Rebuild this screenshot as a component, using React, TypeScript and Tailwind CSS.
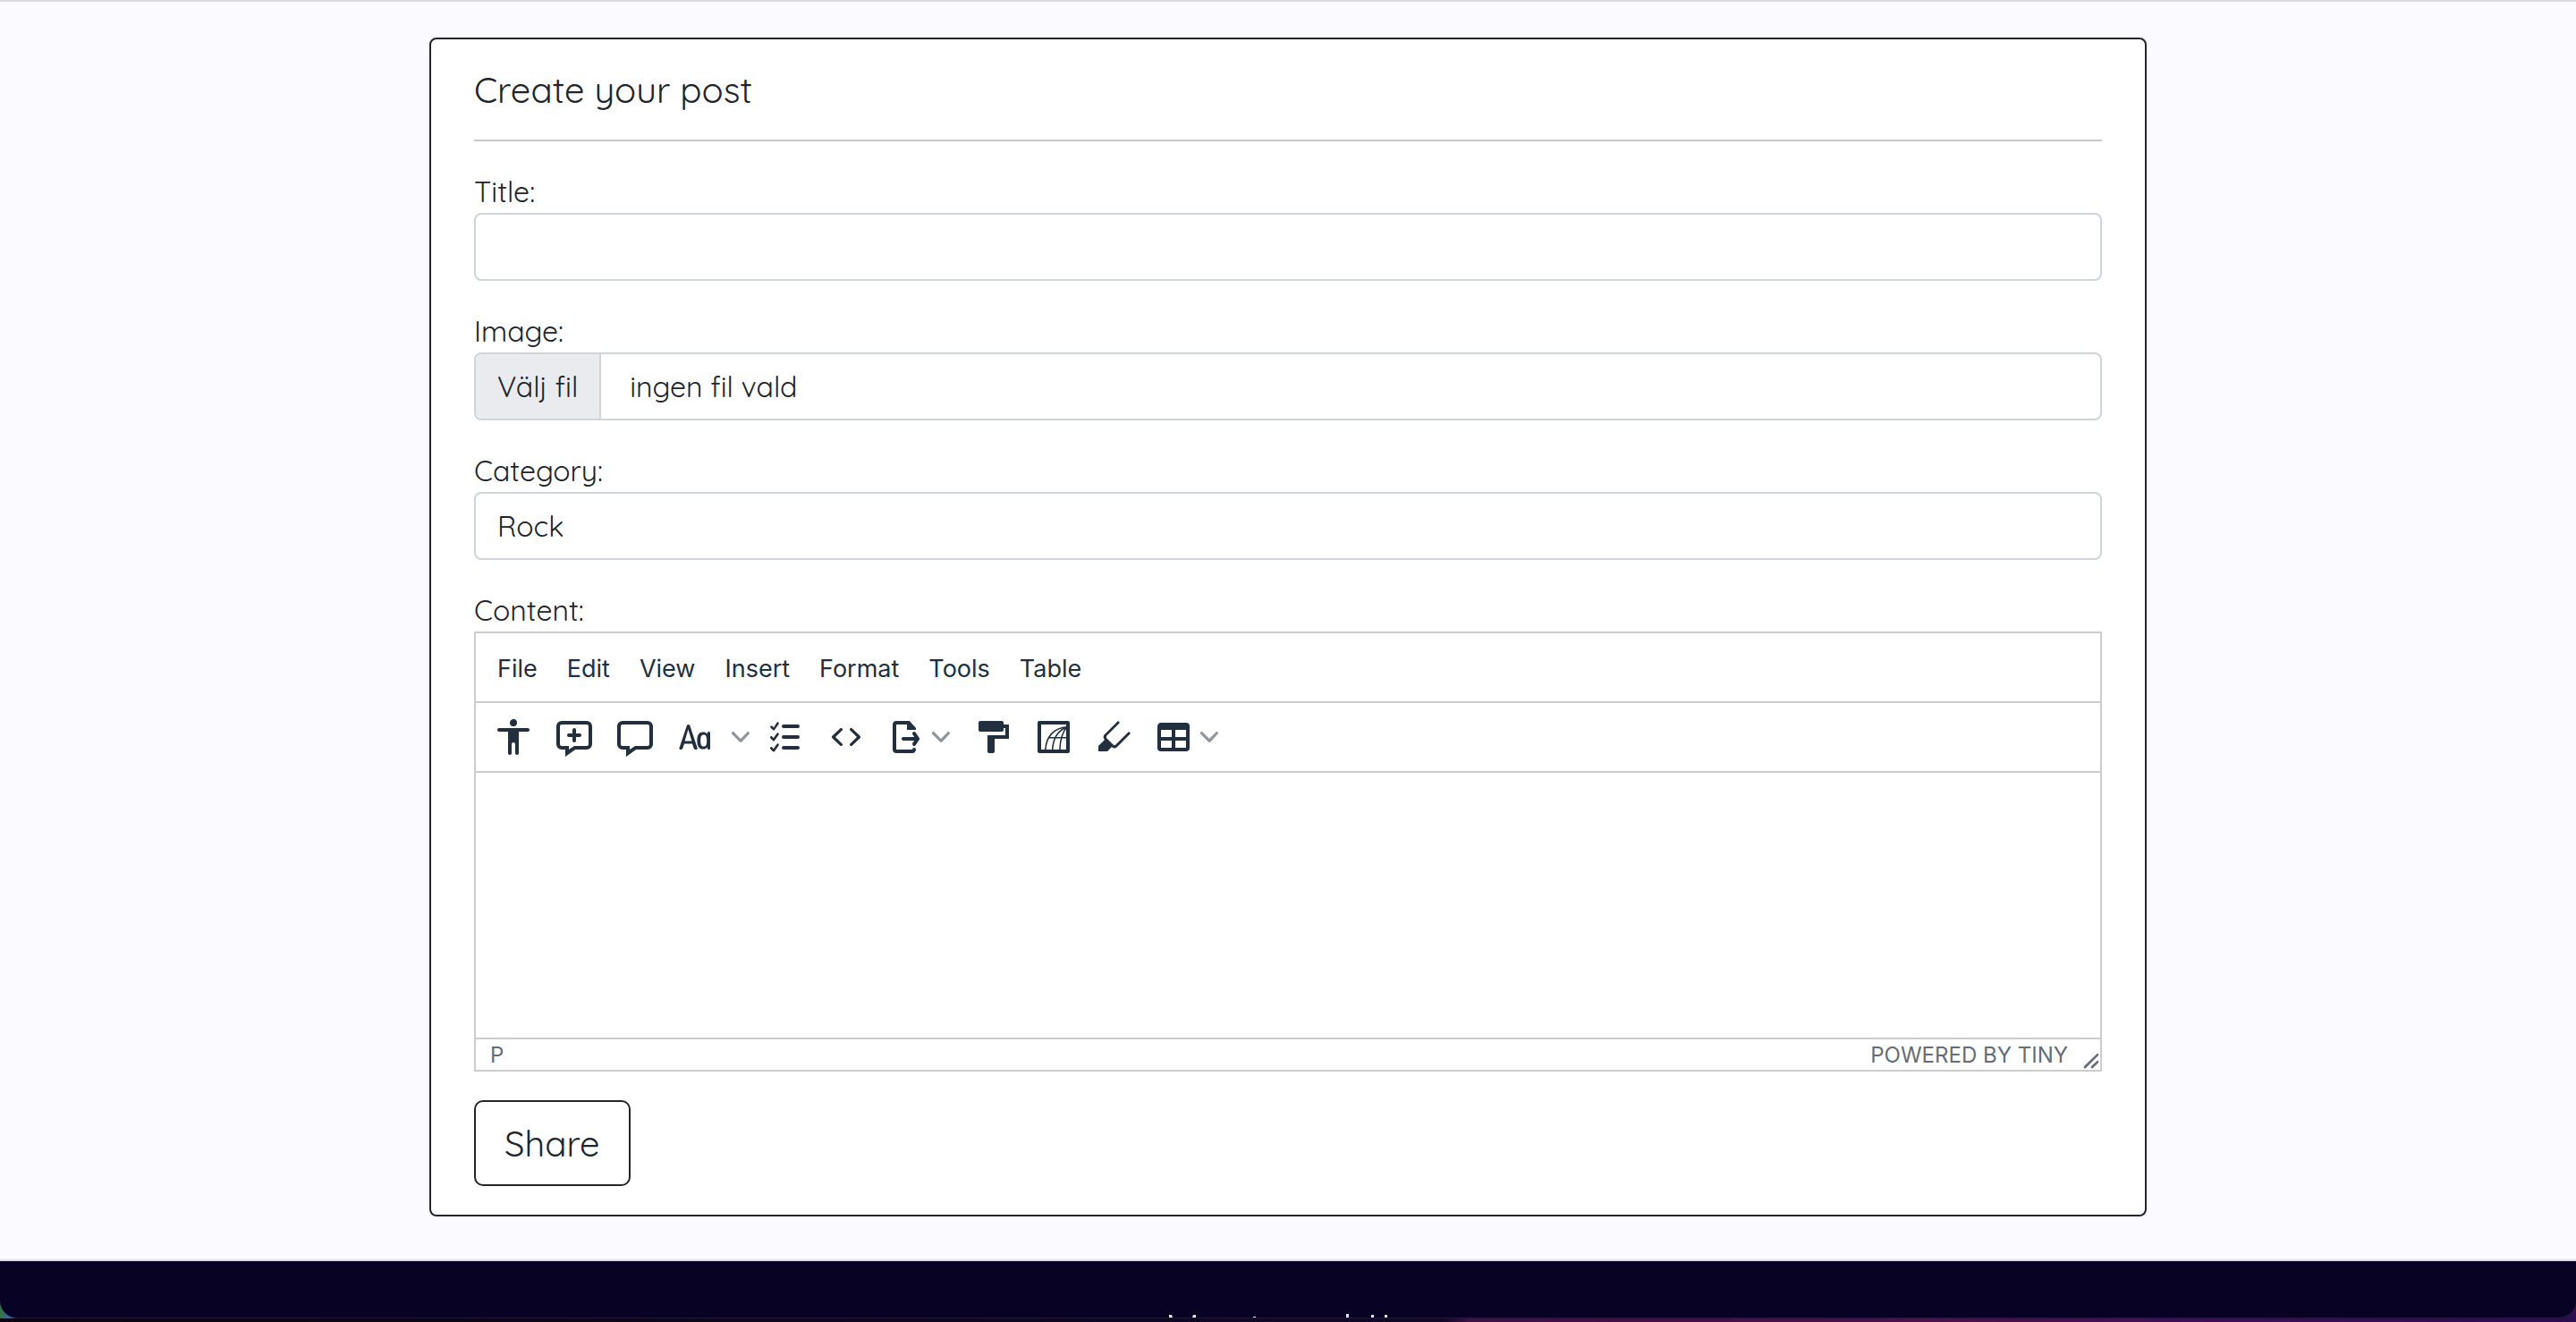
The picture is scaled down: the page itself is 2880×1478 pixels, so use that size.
import React, { useState } from "react";

const MENUS = ["File", "Edit", "View", "Insert", "Format", "Tools", "Table"];

function Icon({ children }: { children: React.ReactNode }) {
  return (
    <svg viewBox="0 0 24 24" className="size-12 shrink-0" fill="currentColor" fillRule="evenodd" aria-hidden="true">
      {children}
    </svg>
  );
}

function Chevron() {
  return (
    <svg viewBox="0 0 10 10" className="size-5 shrink-0 opacity-50" fill="currentColor" aria-hidden="true">
      <path d="M8.7 2.2c.3-.3.8-.3 1 0 .4.4.4.9 0 1.2L5.7 7.8c-.3.3-.9.3-1.2 0L.2 3.4a.8.8 0 0 1 0-1.2c.3-.3.8-.3 1.1 0L5 6l3.7-3.8Z" />
    </svg>
  );
}

function Tool({ label, children }: { label: string; children: React.ReactNode }) {
  return (
    <button type="button" aria-label={label} className="flex h-16 w-[68px] items-center justify-center rounded hover:bg-slate-200">
      <Icon>{children}</Icon>
    </button>
  );
}

function MenuTool({ label, children }: { label: string; children: React.ReactNode }) {
  return (
    <button type="button" aria-label={label} className="flex h-16 w-24 items-center gap-1.5 rounded pl-2 hover:bg-slate-200">
      <Icon>{children}</Icon>
      <Chevron />
    </button>
  );
}

function Toolbar() {
  return (
    <div role="toolbar" aria-label="Editor tools" className="flex h-[78px] items-center border-b-2 border-[#ccc] px-2">
      <Tool label="Accessibility checker">
        <path d="M12 2a2 2 0 0 1 2 2 2 2 0 0 1-2 2 2 2 0 0 1-2-2c0-1.1.9-2 2-2Zm8 7h-5v12c0 .6-.4 1-1 1a1 1 0 0 1-1-1v-5c0-.6-.4-1-1-1a1 1 0 0 0-1 1v5c0 .6-.4 1-1 1a1 1 0 0 1-1-1V9H4a1 1 0 1 1 0-2h16c.6 0 1 .4 1 1s-.4 1-1 1Z" />
      </Tool>
      <Tool label="Add comment">
        <path d="m9 19 3-2h7c.6 0 1-.4 1-1V6c0-.6-.4-1-1-1H5a1 1 0 0 0-1 1v10c0 .6.4 1 1 1h4v2Zm-2 4v-4H5a3 3 0 0 1-3-3V6a3 3 0 0 1 3-3h14a3 3 0 0 1 3 3v10a3 3 0 0 1-3 3h-6.4L7 23Z" />
        <path d="M13 10h2a1 1 0 0 1 0 2h-2v2a1 1 0 0 1-2 0v-2H9a1 1 0 0 1 0-2h2V8a1 1 0 0 1 2 0v2Z" />
      </Tool>
      <Tool label="Show comments">
        <path d="m9 19 3-2h7c.6 0 1-.4 1-1V6c0-.6-.4-1-1-1H5a1 1 0 0 0-1 1v10c0 .6.4 1 1 1h4v2Zm-2 4v-4H5a3 3 0 0 1-3-3V6a3 3 0 0 1 3-3h14a3 3 0 0 1 3 3v10a3 3 0 0 1-3 3h-6.4L7 23Z" />
      </Tool>
      <Tool label="Change case">
        <path d="M18.4 18.2v-.6c-.5.8-1.3 1.2-2.4 1.2-2.2 0-3.3-1.6-3.3-4.8 0-3.1 1-4.7 3.3-4.7 1.1 0 1.8.3 2.4 1.1v-.6c0-.5.4-.8.8-.8s.8.3.8.8v8.4c0 .5-.4.8-.8.8a.8.8 0 0 1-.8-.8Zm-2-7.4c-1.3 0-1.8.9-1.8 3.2 0 2.4.5 3.3 1.7 3.3 1.3 0 1.8-.9 1.8-3.2 0-2.4-.5-3.3-1.7-3.3ZM10 15.7H5.5l-.8 2.6a1 1 0 0 1-1 .7h-.2a.7.7 0 0 1-.7-1l4-12a1 1 0 1 1 2 0l4 12a.7.7 0 0 1-.8 1h-.2a1 1 0 0 1-1-.7l-.8-2.6Zm-.3-1.5-2-6.5-1.9 6.5h3.9Z" />
      </Tool>
      <button type="button" aria-label="Case options" className="flex h-16 w-8 items-center justify-center">
        <Chevron />
      </button>
      <Tool label="Checklist">
        <path d="M11 17h8c.6 0 1 .4 1 1s-.4 1-1 1h-8a1 1 0 0 1 0-2Zm0-6h8a1 1 0 0 1 0 2h-8a1 1 0 0 1 0-2Zm0-6h8a1 1 0 0 1 0 2h-8a1 1 0 1 1 0-2ZM7.2 16c.2-.4.6-.5.9-.3.3.2.4.6.2 1L6 20c-.2.3-.7.4-1 0l-1.3-1.3a.7.7 0 0 1 0-1c.3-.2.7-.2 1 0l.7.9 1.8-2.6Zm0-6c.2-.4.6-.5.9-.3.3.2.4.6.2 1L6 14c-.2.3-.7.4-1 0l-1.3-1.3a.7.7 0 0 1 0-1c.3-.2.7-.2 1 0l.7.9L7.2 10Zm0-6c.2-.4.6-.5.9-.3.3.2.4.6.2 1L6 8c-.2.3-.7.4-1 0L3.8 6.9a.7.7 0 0 1 0-1c.3-.2.7-.2 1 0l.7.9L7.2 4Z" />
      </Tool>
      <Tool label="Source code">
        <path d="M9.8 15.7c.3.3.3.8 0 1-.3.4-.9.4-1.2 0l-4.4-4.1a.8.8 0 0 1 0-1.2l4.4-4.2c.3-.3.9-.3 1.2 0 .3.3.3.8 0 1.1L6 12l3.8 3.7ZM14.2 15.7c-.3.3-.3.8 0 1 .4.4.9.4 1.2 0l4.4-4.1c.3-.3.3-.8 0-1.2l-4.4-4.2a.8.8 0 0 0-1.2 0c-.3.3-.3.8 0 1.1L18 12l-3.8 3.7Z" />
      </Tool>
      <MenuTool label="Export">
        <path d="M14.4 3 18 7v1h-5V5H7v14h9a1 1 0 0 1 2 0c0 1-.8 2-1.9 2H7c-1 0-2-.8-2-1.9V5c0-1 .8-2 1.9-2h7.5Z" />
        <path d="M18.1 12c.5 0 .9.4.9 1 0 .5-.3 1-.8 1h-7.3c-.5 0-.9-.4-.9-1 0-.5.3-1 .8-1h7.3Z" />
        <path d="M16.4 9.2a1 1 0 0 1 1.4.2l2.4 3.6-2.4 3.6a1 1 0 0 1-1.7-1v-.2l1.7-2.4-1.6-2.4a1 1 0 0 1 .2-1.4Z" />
      </MenuTool>
      <Tool label="Format painter">
        <path d="M18 5V4c0-.5-.4-1-1-1H5a1 1 0 0 0-1 1v4c0 .6.5 1 1 1h12c.6 0 1-.4 1-1V7h1v4H9v9c0 .6.4 1 1 1h2c.6 0 1-.4 1-1v-7h8V5h-3Z" />
      </Tool>
      <Tool label="Embed page">
        <path d="M4 3h16c.6 0 1 .4 1 1v16c0 .6-.4 1-1 1H4a1 1 0 0 1-1-1V4c0-.6.4-1 1-1Zm1 2v14h14V5H5Z" />
        <path
          d="M7.4 19.5C7.6 12 12 6.9 19.5 6.4M11.3 19.5C11.6 13 14 8.5 19.5 6.4M15.4 19.5C15.6 14 16.6 9.5 19.5 6.4M9.5 12.4h10"
          fill="none"
          stroke="currentColor"
          strokeWidth="0.8"
        />
      </Tool>
      <Tool label="Permanent pen">
        <path d="M10.5 17.5 8 20H3v-3l3.5-3.5a2 2 0 0 1 0-3L14 3l1 1-7.3 7.3a1 1 0 0 0 0 1.4l3.6 3.6c.4.4 1 .4 1.4 0L20 9l1 1-7.6 7.6a2 2 0 0 1-2.8 0l-.1-.1Z" />
      </Tool>
      <MenuTool label="Table">
        <path d="M19 4a2 2 0 0 1 2 2v12a2 2 0 0 1-2 2H5a2 2 0 0 1-2-2V6c0-1.1.9-2 2-2h14ZM5 14v4h6v-4H5Zm14 0h-6v4h6v-4Zm0-6h-6v4h6V8ZM5 12h6V8H5v4Z" />
      </MenuTool>
    </div>
  );
}

function Editor() {
  return (
    <div className="border-2 border-[#ccc] font-['Inter',sans-serif] text-[#222f3e]">
      <div role="menubar" className="flex h-[78px] items-center gap-[17px] border-b-2 border-[#ccc] px-4 pt-1">
        {MENUS.map((menu) => (
          <button key={menu} type="button" role="menuitem" className="h-14 rounded px-2 text-[27px] hover:bg-slate-200">
            {menu}
          </button>
        ))}
      </div>
      <Toolbar />
      <textarea id="content" className="block h-[296px] w-full resize-none p-4 text-[27px] outline-none" />
      <div className="flex h-9 items-center justify-between border-t-2 border-[#ccc] pl-4 text-2xl text-[#646d78]">
        <span className="pt-0.5">P</span>
        <div className="flex h-full items-center gap-4">
          <a href="#tiny" className="pt-0.5">POWERED BY TINY</a>
          <svg viewBox="0 0 10 10" className="size-5 self-end" fill="currentColor" aria-hidden="true">
            <path d="M8.1 1.1A.5.5 0 1 1 9 2L2 9A.5.5 0 1 1 1 8l7.1-6.9ZM8.1 5.1A.5.5 0 1 1 9 6L6 9A.5.5 0 1 1 5 8l3.1-2.9Z" />
          </svg>
        </div>
      </div>
    </div>
  );
}

export default function App() {
  const [fileName, setFileName] = useState("ingen fil vald");

  return (
    <div className="bg-[#0d0418] font-['Quicksand','Lato',sans-serif] text-[32px] leading-[48px] text-[#212529]">
      <main className="border-y-2 border-[#dcdbe2] bg-[#fbfaff] pt-10 pb-12">
        <form
          onSubmit={(event) => event.preventDefault()}
          className="mx-auto w-2/3 rounded-lg border-2 border-[#212529] bg-white px-12 py-8"
        >
          <h1 className="border-b-2 border-[#c8c8c8] pb-8 text-[40px] leading-[48px]">Create your post</h1>

          <div className="mt-8">
            <label htmlFor="title" className="block">Title:</label>
            <input id="title" type="text" className="block h-[76px] w-full rounded-lg border-2 border-[#ced4da] bg-white px-6 outline-none" />
          </div>

          <div className="mt-8">
            <label htmlFor="image" className="block">Image:</label>
            <label htmlFor="image" className="flex h-[76px] items-stretch overflow-hidden rounded-lg border-2 border-[#ced4da]">
              <span className="flex items-center border-r-2 border-[#ced4da] bg-[#eaebef] px-6">Välj fil</span>
              <span className="flex items-center px-8">{fileName}</span>
            </label>
            <input
              id="image"
              type="file"
              className="sr-only"
              onChange={(event) => setFileName(event.target.files?.[0]?.name ?? "ingen fil vald")}
            />
          </div>

          <div className="mt-8">
            <label htmlFor="category" className="block">Category:</label>
            <select id="category" className="block h-[76px] w-full appearance-none rounded-lg border-2 border-[#ced4da] bg-white px-6 outline-none">
              <option>Rock</option>
            </select>
          </div>

          <div className="mt-8">
            <label htmlFor="content" className="block">Content:</label>
            <Editor />
          </div>

          <button type="submit" className="mt-8 block h-24 rounded-[10px] border-2 border-[#212529] px-8 text-[40px]">
            Share
          </button>
        </form>
      </main>

      <div className="bg-[linear-gradient(to_right,#35704f_5px,#2f6aa8_6px,#2f6aa8_20px,#0d0418_40px,#2c0d50)]">
        <footer className="flex h-16 items-end justify-center overflow-hidden rounded-b-[20px] border-b border-[#1e1a35] bg-[#080224]">
          <svg viewBox="0 0 268 4" className="h-1 w-[268px]" fill="#e4e4ec" aria-hidden="true">
            <path d="M1 1h3l1 3H1ZM28 1h3v3h-4ZM95 3h3v1h-3ZM199 0h3v4h-3ZM227 1h3v3h-3ZM242 1h3v3h-3Z" />
          </svg>
        </footer>
      </div>
      <div className="h-1 bg-[linear-gradient(to_right,#0a0412,#100826_56%,#3a1045_57%,#45124a_75%,#3c1052_85%,#2c0d50)]" />
    </div>
  );
}
